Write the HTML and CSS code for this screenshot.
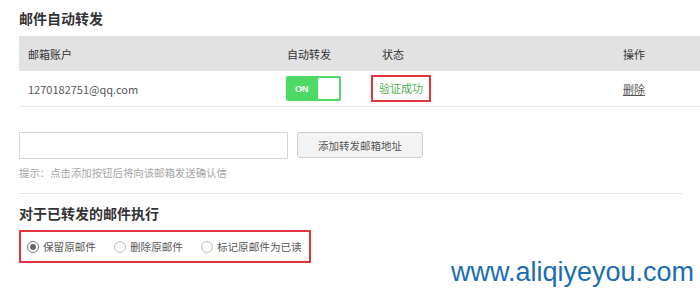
FILE: index.html
```html
<!DOCTYPE html>
<html lang="zh-CN">
<head>
    <meta charset="UTF-8">
    <meta name="viewport" content="width=device-width, initial-scale=1.0">
    <title>邮件自动转发</title>
    <link rel="stylesheet" href="styles.css">
</head>
<body>

<div class="container">
    <h2>邮件自动转发</h2>

    <div class="table">
        <div class="row head">
            <div class="cell">邮箱账户</div>
            <div class="cell">自动转发</div>
            <div class="cell">状态</div>
            <div class="cell">操作</div>
        </div>
        <div class="row">
            <div class="cell">1270182751@qq.com</div>
            <div class="cell">
                <span class="switch"><span class="switch-label">ON</span><span class="knob"></span></span>
            </div>
            <div class="cell">
                <span class="mark status">验证成功</span>
            </div>
            <div class="cell"><a class="remove" href="#">删除</a></div>
        </div>
    </div>

    <div class="add-row">
        <input class="address" type="text">
        <button class="add-btn">添加转发邮箱地址</button>
    </div>
    <p class="hint">提示：点击添加按钮后将向该邮箱发送确认信</p>

    <hr class="divider">

    <h3>对于已转发的邮件执行</h3>
    <div class="mark options">
        <label class="option"><span class="radio checked"></span>保留原邮件</label>
        <label class="option"><span class="radio"></span>删除原邮件</label>
        <label class="option"><span class="radio"></span>标记原邮件为已读</label>
    </div>
</div>

<div class="watermark">www.aliqiyeyou.com</div>

</body>
</html>
```

FILE: styles.css
```css
body {
    font-family: "Noto Sans CJK SC", "Liberation Sans", sans-serif;
    background-color: #fff;
    color: #333;
    margin: 0;
    padding: 0;
}
.container {
    padding: 9px 0 0 19px;
}
h2 {
    font-size: 14px;
    line-height: 18px;
    margin: 0 0 9px;
    color: #333;
}
.row {
    display: grid;
    grid-template-columns: 259px 95px 241px 86px;
    align-items: center;
    height: 35px;
    font-size: 11px;
    color: #555;
    border-bottom: 1px solid #e8e8e8;
}
.row.head {
    background-color: #e2e2e2;
    color: #333;
    border-bottom: none;
}
.cell {
    padding-left: 9px;
}
.switch {
    display: flex;
    align-items: center;
    justify-content: space-between;
    width: 55px;
    height: 25px;
    box-sizing: border-box;
    padding: 2px;
    margin-left: -1px;
    background-color: #4cd964;
    border-radius: 2px;
}
.switch-label {
    color: #fff;
    font-family: "Liberation Sans", sans-serif;
    font-weight: bold;
    font-size: 9px;
    padding-left: 7px;
}
.knob {
    width: 21px;
    height: 21px;
    background-color: #fff;
    border-radius: 1px;
}
.mark {
    border: 2px solid #e2343b;
}
.status {
    display: inline-block;
    color: #4caf50;
    padding: 2px 6px;
    margin-left: -11px;
    line-height: 19px;
}
.remove {
    color: #555;
    text-decoration: underline;
}
.add-row {
    display: flex;
    align-items: flex-start;
    margin-top: 25px;
}
.address {
    width: 269px;
    height: 27px;
    box-sizing: border-box;
    border: 1px solid #d5d5d5;
    margin: 0;
}
.add-btn {
    width: 126px;
    height: 26px;
    margin-left: 9px;
    border: 1px solid #cfcfcf;
    border-radius: 3px;
    background-color: #f3f3f3;
    color: #555;
    font-family: inherit;
    font-size: 10.5px;
}
.hint {
    font-size: 10.4px;
    color: #a5a5a5;
    margin: 7px 0 0;
    line-height: 14px;
}
.divider {
    width: 664px;
    margin: 13px 0 0;
    border: none;
    border-top: 1px solid #e2e2e2;
}
h3 {
    font-size: 14px;
    line-height: 18px;
    margin: 10px 0 0;
    color: #333;
}
.options {
    display: flex;
    align-items: center;
    width: 292px;
    height: 33px;
    box-sizing: border-box;
    padding-left: 6px;
    margin-top: 8px;
    font-size: 10.6px;
    color: #555;
}
.option {
    display: flex;
    align-items: center;
    flex-shrink: 0;
    white-space: nowrap;
    margin-right: 18px;
}
.option:last-child {
    margin-right: 0;
}
.radio {
    width: 12px;
    height: 12px;
    border: 1px solid #bbb;
    border-radius: 50%;
    box-sizing: border-box;
    margin-right: 4px;
    position: relative;
}
.radio.checked {
    border-color: #777;
}
.radio.checked::after {
    content: "";
    position: absolute;
    left: 2px;
    top: 2px;
    width: 6px;
    height: 6px;
    border-radius: 50%;
    background-color: #666;
}
.watermark {
    position: absolute;
    left: 451px;
    top: 257px;
    font-family: "Liberation Sans", sans-serif;
    font-size: 27px;
    color: #1a6db3;
}
```
